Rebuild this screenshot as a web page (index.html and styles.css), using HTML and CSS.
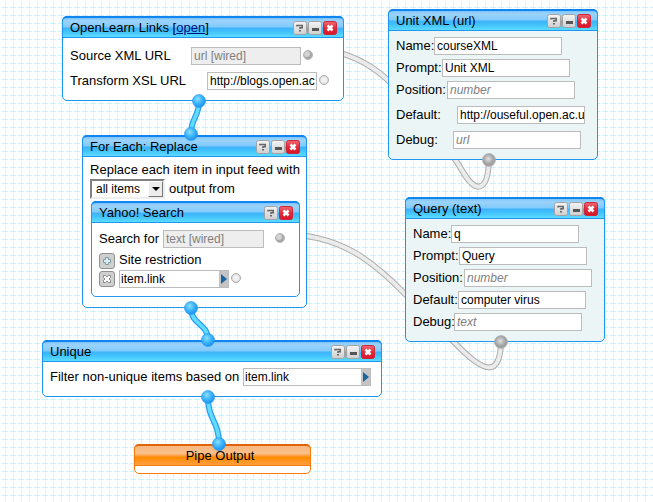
FILE: index.html
```html
<!DOCTYPE html>
<html lang="en">
<head>
<meta charset="utf-8">
<title>Pipe editor</title>
<link rel="stylesheet" href="styles.css">
</head>
<body>
<svg class="defs" width="0" height="0" aria-hidden="true">
  <defs>
    <radialGradient id="blueBall" cx="0.4" cy="0.35" r="0.65"><stop offset="0" stop-color="#8ee0ff"/><stop offset="0.5" stop-color="#41b8fb"/><stop offset="1" stop-color="#1b92f0"/></radialGradient>
    <radialGradient id="grayBall" cx="0.45" cy="0.42" r="0.6"><stop offset="0" stop-color="#e2e2e2"/><stop offset="0.4" stop-color="#b9b9b9"/><stop offset="0.75" stop-color="#9c9c9c"/><stop offset="1" stop-color="#b4b4b4"/></radialGradient>
    <linearGradient id="btnGray" x2="0" y2="1"><stop offset="0" stop-color="#f4f4f4"/><stop offset="1" stop-color="#cfcfcf"/></linearGradient>
    <linearGradient id="btnRed" x2="0" y2="1"><stop offset="0" stop-color="#ee6a72"/><stop offset="0.5" stop-color="#e02a3c"/><stop offset="1" stop-color="#d81428"/></linearGradient>
    <symbol id="help" viewBox="0 0 14 14"><rect x=".5" y=".5" width="13" height="13" rx="2" fill="url(#btnGray)" stroke="#a2a2a2"/><path d="M4 5.500V4.500h5.200V6.700H7V8M6 9.700h2" fill="none" stroke="#666" stroke-width="1.600"/></symbol>
    <symbol id="min" viewBox="0 0 14 14"><rect x=".5" y=".5" width="13" height="13" rx="2" fill="url(#btnGray)" stroke="#a2a2a2"/><path d="M4 7h7v3H4z" fill="#555"/></symbol>
    <symbol id="close" viewBox="0 0 14 14"><rect x=".5" y=".5" width="13" height="13" rx="2" fill="url(#btnRed)" stroke="#cf2536"/><path d="M4.500 4.500l5 5M9.500 4.500l-5 5" stroke="#fff" stroke-width="2.500"/></symbol>
  </defs>
</svg>
<main class="canvas">
  <svg class="wires" width="653" height="502">
    <g class="wire gray-edge">
      <path id="w1" d="M308 49C360 49 388 76 420 114C440 138 455 158 463 172C476 194 488 192 489 160"/>
      <path id="w2" d="M280 234C340 234 373 261 405 294L453 341C484 374 500 378 501 342"/>
    </g>
    <g class="wire gray-core"><use href="#w1"/><use href="#w2"/></g>
    <g class="wire blue-edge">
      <path id="w3" d="M199 101C199 118 191 117 191 134"/>
      <path id="w4" d="M191 308C191 325 208 323 208 340"/>
      <path id="w5" d="M208 397C208 421 219 420 219 444"/>
    </g>
    <g class="wire blue-core"><use href="#w3"/><use href="#w4"/><use href="#w5"/></g>
  </svg>

  <section class="module links">
    <header><h2>OpenLearn Links [<a href="#">open</a>]</h2><svg class="btn"><use href="#help"/></svg><svg class="btn"><use href="#min"/></svg><svg class="btn"><use href="#close"/></svg></header>
    <div class="body">
      <div class="field source"><label>Source XML URL</label><div class="input wired">url [wired]</div><i class="port on"></i></div>
      <div class="field xsl"><label>Transform XSL URL</label><div class="input">http://blogs.open.ac</div><i class="port"></i></div>
    </div>
  </section>

  <section class="module param unit">
    <header><h2>Unit XML (url)</h2><svg class="btn"><use href="#help"/></svg><svg class="btn"><use href="#min"/></svg><svg class="btn"><use href="#close"/></svg></header>
    <div class="body">
      <div class="field name"><label>Name:</label><div class="input">courseXML</div></div>
      <div class="field prompt"><label>Prompt:</label><div class="input">Unit XML</div></div>
      <div class="field position"><label>Position:</label><div class="input hint">number</div></div>
      <div class="field default"><label>Default:</label><div class="input">http://ouseful.open.ac.u</div></div>
      <div class="field debug"><label>Debug:</label><div class="input hint">url</div></div>
    </div>
  </section>

  <section class="module param query">
    <header><h2>Query (text)</h2><svg class="btn"><use href="#help"/></svg><svg class="btn"><use href="#min"/></svg><svg class="btn"><use href="#close"/></svg></header>
    <div class="body">
      <div class="field name"><label>Name:</label><div class="input">q</div></div>
      <div class="field prompt"><label>Prompt:</label><div class="input">Query</div></div>
      <div class="field position"><label>Position:</label><div class="input hint">number</div></div>
      <div class="field default"><label>Default:</label><div class="input">computer virus</div></div>
      <div class="field debug"><label>Debug:</label><div class="input hint">text</div></div>
    </div>
  </section>

  <section class="module foreach">
    <header><h2>For Each: Replace</h2><svg class="btn"><use href="#help"/></svg><svg class="btn"><use href="#min"/></svg><svg class="btn"><use href="#close"/></svg></header>
    <div class="body">
      <p class="sentence">Replace each item in input feed with</p>
      <div class="choice"><div class="select"><span>all items</span><b></b></div><span class="after">output from</span></div>
      <section class="module inner">
        <header><h2>Yahoo! Search</h2><svg class="btn"><use href="#help"/></svg><svg class="btn"><use href="#close"/></svg></header>
        <div class="body">
          <div class="field search"><label>Search for</label><div class="input wired">text [wired]</div><i class="port on"></i></div>
          <div class="field add"><svg class="tool" viewBox="0 0 14 14"><path d="M5.500 3.500h3v2h2v3h-2v2h-3v-2h-2v-3h2z" fill="#d8eef5" stroke="#8199a3"/></svg><label>Site restriction</label></div>
          <div class="field site"><svg class="tool" viewBox="0 0 14 14"><path d="M3.500 3.500h2L7 5l1.500-1.500h2v2L9 7l1.500 1.500v2h-2L7 9l-1.500 1.500h-2v-2L5 7 3.500 5.500z" fill="#fff" stroke="#888"/></svg><div class="input pick">item.link<b></b></div><i class="port"></i></div>
        </div>
      </section>
    </div>
  </section>

  <section class="module unique">
    <header><h2>Unique</h2><svg class="btn"><use href="#help"/></svg><svg class="btn"><use href="#min"/></svg><svg class="btn"><use href="#close"/></svg></header>
    <div class="body">
      <div class="field"><label>Filter non-unique items based on</label><div class="input pick">item.link<b></b></div></div>
    </div>
  </section>

  <section class="module output"><header><h2>Pipe Output</h2></header></section>

  <svg class="terminals" width="653" height="502">
    <g fill="url(#blueBall)" stroke="#2196f0" stroke-width=".6">
      <circle cx="199" cy="101" r="6.500"/><circle cx="191" cy="134" r="6.500"/><circle cx="191" cy="308" r="6.500"/><circle cx="208" cy="340" r="6.500"/><circle cx="208" cy="397" r="6.500"/><circle cx="219" cy="444" r="6.500"/>
    </g>
    <g fill="url(#grayBall)" stroke="#aaa" stroke-width=".6"><circle cx="489" cy="160" r="6.500"/><circle cx="501" cy="342" r="6.500"/></g>
  </svg>
</main>
</body>
</html>
```
FILE: styles.css
```css
* { box-sizing: border-box; }
body {
  margin: 0;
  font: 13px/18px "Liberation Sans", Arial, sans-serif;
  color: #000;
}
.defs { position: absolute; }
.canvas {
  position: relative;
  width: 653px;
  height: 502px;
  overflow: hidden;
  background-color: #fff;
  background-image:
    linear-gradient(90deg, #fff 2px, transparent 2px),
    linear-gradient(transparent 7px, #cbf1fb 7px),
    linear-gradient(90deg, transparent 5px, #dcf5fc 5px, #dcf5fc 6px, transparent 6px);
  background-size: 8px 8px;
}
.wires, .terminals { position: absolute; left: 0; top: 0; }
.terminals { pointer-events: none; }
.wire { fill: none; }
.gray-edge { stroke: #adadad; stroke-width: 6; }
.gray-core { stroke: #ebebeb; stroke-width: 4; }
.blue-edge { stroke: #2a9df4; stroke-width: 6; }
.blue-core { stroke: #62dcff; stroke-width: 3.5px; }

.module {
  position: absolute;
  background: #fff;
  border: 1px solid #1e97f3;
  border-radius: 5px;
  white-space: nowrap;
}
.module > header {
  display: flex;
  align-items: center;
  gap: 1px;
  height: 22px;
  margin: -1px -1px 0;
  padding: 0 6px 0 7px;
  border: 1px solid #1e97f3;
  border-top: 2px solid #0f86ef;
  border-radius: 5px 5px 0 0;
  background: linear-gradient(#7fc4fa 0, #9bd3fb 15%, #80cafb 48%, #3eb2fa 52%, #42c2fd 72%, #5cdcff 100%);
}
.module h2 { flex: 1; margin: 0; font-size: 13px; font-weight: normal; line-height: 18px; }
.module a { color: #00117b; }
.btn { width: 14px; height: 14px; flex: none; }
.body { display: flex; flex-direction: column; padding: 0 7px; }

.links { left: 62px; top: 16px; width: 282px; height: 85px; }
.unit { left: 388px; top: 9px; width: 210px; height: 151px; }
.query { left: 405px; top: 197px; width: 200px; height: 145px; }
.foreach { left: 82px; top: 135px; width: 225px; height: 173px; }
.unique { left: 42px; top: 340px; width: 340px; height: 57px; }
.output { left: 134px; top: 444px; width: 177px; height: 30px; }
.param { background: #ebf5f6; }

.field { display: flex; height: 18px; }
.field label { flex: none; }
.input {
  flex: none;
  width: 128px;
  height: 18px;
  padding: 0 0 0 2px;
  overflow: hidden;
  border: 1px solid #bcbcbc;
  background: #fff;
  font-size: 12px;
  line-height: 16px;
}
.wired { background: #eee; color: #808080; }
.hint { color: #808080; font-style: italic; }
.port {
  flex: none;
  width: 10px;
  height: 10px;
  margin: 3px 0 0 2px;
  border: 1px solid #aaa;
  border-radius: 50%;
  background: #f0f0f0;
  box-shadow: inset 0 0 0 1px #ddd;
}
.port.on { border-color: #b4b4b4; background: #d4d4d4; box-shadow: inset -1px -1px 1px 1px #a4a4a4; }

.links .body { padding-top: 9px; gap: 7px; }
.links .input { width: 110px; }
.source label { width: 121px; }
.xsl label { width: 137px; }

.param .body { padding-top: 6px; gap: 4px; }
.name label { width: 38px; }
.prompt label { width: 46px; }
.position label { width: 51px; }
.query .default label { width: 45px; }
.query .debug label { width: 41px; }
.unit .default { margin-top: 3px; }
.unit .debug { margin-top: 3px; }
.unit .default label { width: 61px; }
.unit .debug label { width: 57px; }

.sentence { margin: 4px 0 0; letter-spacing: 0.03px; }
.choice { display: flex; gap: 4px; height: 20px; }
.after { line-height: 20px; }
.select {
  display: flex;
  width: 75px;
  height: 20px;
  padding-left: 4px;
  border: 2px solid;
  border-color: #808080 #eee #eee #808080;
  background: #fff;
  font-size: 12px;
  line-height: 16px;
}
.select span { flex: 1; }
.select b {
  display: flex;
  width: 15px;
  height: 16px;
  align-items: center;
  justify-content: center;
  border: 1px solid;
  border-color: #fff #777 #777 #fff;
  background: #ececec;
}
.select b::after { content: ""; border: 4px solid transparent; border-top-color: #000; border-bottom: 0; }

.inner { position: relative; width: 209px; height: 96px; margin: 2px 0 0 1px; }
.inner .body { padding-top: 7px; }
.search label { width: 64px; }
.search .input { width: 101px; }
.search .port { margin-left: 11px; }
.tool { width: 16px; height: 16px; margin-right: 4px; border: 1px solid #909090; border-radius: 3px; background: #cfcfcf; flex: none; }
.add { margin-top: 4px; }
.add label { line-height: 16px; }
.add .tool, .site .tool { margin-top: 1px; }
.pick { display: flex; justify-content: space-between; padding-left: 1px; }
.pick b {
  display: flex;
  width: 9px;
  align-items: center;
  justify-content: center;
  background: #c4c4c4;
}
.pick b::after { content: ""; border: 5px solid transparent; border-left: 6px solid #1a659e; border-right: 0; }
.site .input { width: 110px; }
.unique .body { padding-top: 6px; }
.unique label { width: 193px; }

.output, .output > header { border-color: #f57c0a; }
.output > header {
  padding: 0 5px 0 0;
  border-top-color: #e26208;
  background: linear-gradient(#f7b880 0, #fbc08a 40%, #fba650 48%, #ff8c00 60%, #ff9520 80%, #ff9f45 100%);
}
.output h2 { text-align: center; }
```
